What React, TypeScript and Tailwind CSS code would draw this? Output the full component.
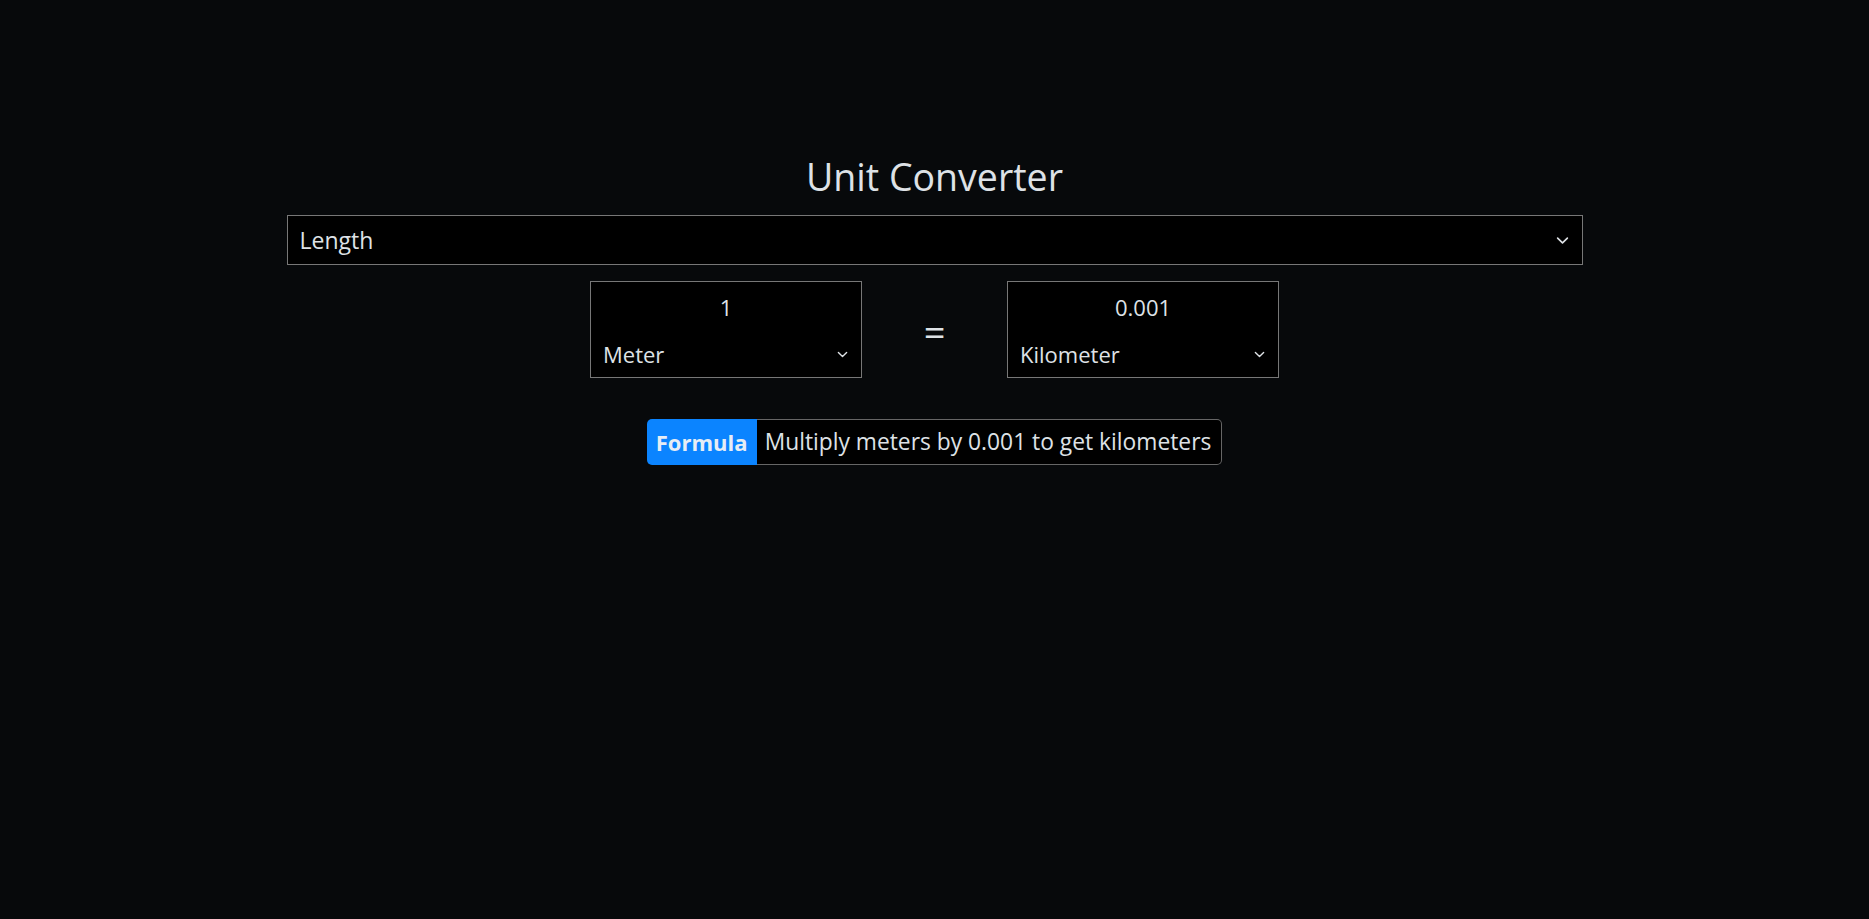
import React from "react";

function Chevron({ size }: { size: number }) {
  return (
    <svg width={size} height={size} viewBox="0 0 16 16" fill="none" className="shrink-0">
      <path d="m2 5 6 6 6-6" stroke="#dee2e6" strokeWidth="2" strokeLinecap="round" strokeLinejoin="round" />
    </svg>
  );
}

function UnitBox({ value, unit }: { value: string; unit: string }) {
  return (
    <div className="w-[272px] h-[97px] border border-[#777] bg-black flex flex-col">
      <div className="h-[48px] flex items-center justify-center pt-[2px]">{value}</div>
      <div className="h-[47px] flex items-center justify-between pl-[12px] pr-[13px] pt-[2px]">
        <span>{unit}</span>
        <Chevron size={11} />
      </div>
    </div>
  );
}

export default function App() {
  return (
    <div className="min-h-screen w-full bg-[#07090b] text-[#dee2e6] font-['Open_Sans',sans-serif] flex flex-col items-center pt-[154px]">
      <h1 className="text-[37.5px] leading-[45px] font-normal">Unit Converter</h1>
      <div className="mt-[16px] w-[1296px] h-[50px] border border-[#777] bg-black flex items-center justify-between pl-[12px] pr-[13px] text-[23px]">
        <span className="pt-[1px]">Length</span>
        <Chevron size={13} />
      </div>
      <div className="mt-[16px] flex items-center text-[22px]">
        <UnitBox value="1" unit="Meter" />
        <div className="w-[145px] flex items-center justify-center text-[38px] leading-none pt-[2px]">=</div>
        <UnitBox value="0.001" unit="Kilometer" />
      </div>
      <div className="mt-[41px] flex h-[46px]">
        <div className="w-[110px] bg-[#0b84ff] rounded-l-[5px] flex items-center justify-center font-bold text-[22px] text-[#e6edf5]">
          Formula
        </div>
        <div className="flex items-center bg-black border border-l-0 border-[#666] rounded-r-[5px] pl-[8px] pr-[10px] text-[22.8px] pt-[1px]">
          Multiply meters by 0.001 to get kilometers
        </div>
      </div>
    </div>
  );
}
